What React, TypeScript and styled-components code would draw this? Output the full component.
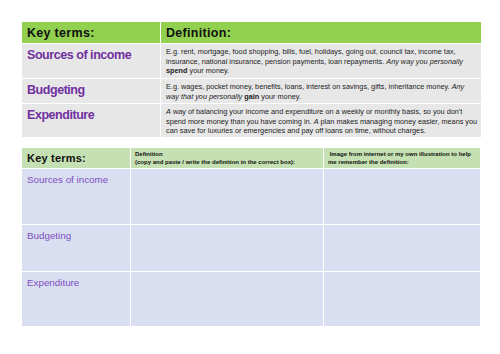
import type { FC, ReactElement } from "react";
import styled, { createGlobalStyle } from "styled-components";

interface Term {
    name: string;
    lines: ReactElement[];
    height: number;
}

interface RowProps {
    h: number;
}

const GlobalStyle = createGlobalStyle`
    html, body {
        margin: 0;
        padding: 0;
        background: #ffffff;
    }
    body {
        font-family: "Liberation Sans", Arial, sans-serif;
    }
`;

const Page = styled.div`
    width: 500px;
    height: 354px;
    padding: 22px 20px 0 22px;
    box-sizing: border-box;
    display: flex;
    flex-direction: column;
    gap: 11px;
`;

const TermTable = styled.div`
    display: grid;
    grid-template-columns: 138px 320px;
    column-gap: 1px;
    row-gap: 1px;
    width: 459px;
`;

const GreenHead = styled.div`
    background: #92d050;
    height: 21px;
    display: flex;
    align-items: center;
    padding-left: 5px;
    font-weight: bold;
    font-size: 12.5px;
    color: #111;
    letter-spacing: 0.3px;
`;

const TermCell = styled.div<RowProps>`
    background: #e7e7e7;
    height: ${({ h }) => h}px;
    padding: 4px 0 0 5px;
    box-sizing: border-box;
    color: #7030a0;
    font-weight: bold;
    font-size: 12.5px;
    letter-spacing: -0.45px;
`;

const DefCell = styled.div<RowProps>`
    background: #e7e7e7;
    height: ${({ h }) => h}px;
    padding: 3px 0 0 5px;
    box-sizing: border-box;
    color: #222;
    font-size: 7.3px;
    line-height: 9.6px;
`;

const Line = styled.span`
    display: block;
    white-space: nowrap;
`;

const FillTable = styled.div`
    display: grid;
    grid-template-columns: 108px 192px 156px;
    column-gap: 1px;
    row-gap: 1px;
    width: 458px;
`;

const PaleHead = styled.div`
    background: #c5e0b3;
    height: 20px;
    display: flex;
    flex-direction: column;
    justify-content: center;
    padding-left: 5px;
    color: #111;
`;

const PaleKey = styled(PaleHead)`
    font-weight: bold;
    font-size: 11px;
    letter-spacing: 0.2px;
`;

const PaleSmall = styled(PaleHead)`
    font-size: 6px;
    line-height: 8.5px;
    font-weight: bold;
    padding-left: 4px;
`;

const BlueCell = styled.div<RowProps>`
    background: #d9dff1;
    height: ${({ h }) => h}px;
    padding: 5px 0 0 5px;
    box-sizing: border-box;
    color: #7e4fbf;
    font-size: 9.8px;
`;

const terms: Term[] = [
    {
        name: "Sources of income",
        height: 34,
        lines: [
            <Line key="a">E.g. rent, mortgage, food shopping, bills, fuel, holidays, going out, council tax, income tax,</Line>,
            <Line key="b">insurance, national insurance, pension payments, loan repayments. <i>Any way you personally</i></Line>,
            <Line key="c"><b>spend</b> your money.</Line>,
        ],
    },
    {
        name: "Budgeting",
        height: 24,
        lines: [
            <Line key="a">E.g. wages, pocket money, benefits, loans, interest on savings, gifts, inheritance money. <i>Any</i></Line>,
            <Line key="b"><i>way that you personally</i> <b>gain</b> your money.</Line>,
        ],
    },
    {
        name: "Expenditure",
        height: 33,
        lines: [
            <Line key="a"><i>A</i> way of balancing your income and expenditure on a weekly or monthly basis, so you don't</Line>,
            <Line key="b">spend more money than you have coming in. <i>A</i> plan makes managing money easier, means you</Line>,
            <Line key="c">can save for luxuries or emergencies and pay off loans on time, without charges.</Line>,
        ],
    },
];

const blankHeights: number[] = [55, 46, 54];

const App: FC = (): ReactElement => {

    return (
        <Page>
            <GlobalStyle />
            <TermTable>
                <GreenHead>Key terms:</GreenHead>
                <GreenHead>Definition:</GreenHead>
                {terms.map((t) => [
                    <TermCell key={t.name + "t"} h={t.height}>{ t.name }</TermCell>,
                    <DefCell key={t.name + "d"} h={t.height}>{ t.lines }</DefCell>,
                ])}
            </TermTable>
            <FillTable>
                <PaleKey>Key terms:</PaleKey>
                <PaleSmall>
                    <Line>Definition</Line>
                    <Line>(copy and paste / write the definition in the correct box):</Line>
                </PaleSmall>
                <PaleSmall>
                    <Line>&nbsp;Image from internet or my own illustration to help</Line>
                    <Line>me remember the definition:</Line>
                </PaleSmall>
                {terms.map((t, i) => [
                    <BlueCell key={t.name + "1"} h={blankHeights[i]}>{ t.name }</BlueCell>,
                    <BlueCell key={t.name + "2"} h={blankHeights[i]} />,
                    <BlueCell key={t.name + "3"} h={blankHeights[i]} />,
                ])}
            </FillTable>
        </Page>
    );

}

export default App;
